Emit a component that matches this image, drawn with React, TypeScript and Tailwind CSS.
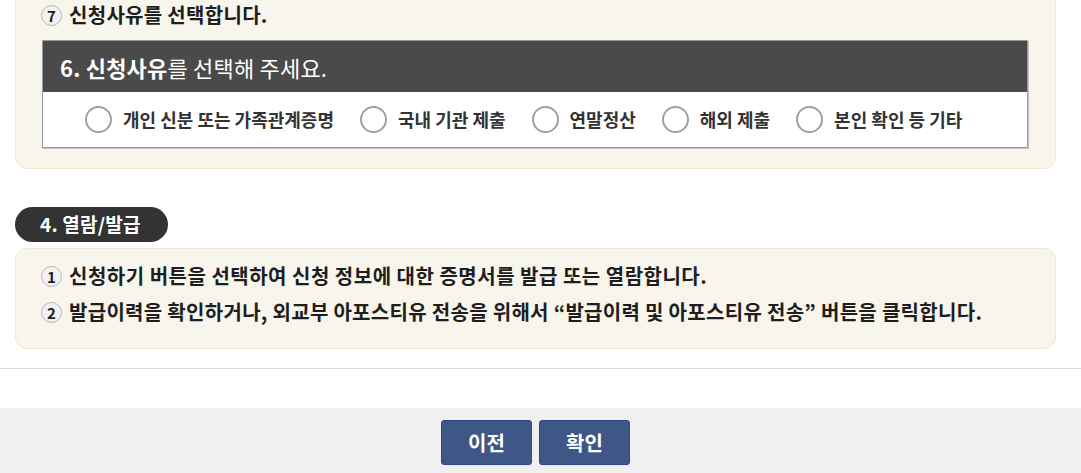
import { Fragment } from 'react';

const reasons = ['개인 신분 또는 가족관계증명', '국내 기관 제출', '연말정산', '해외 제출', '본인 확인 등 기타'];

function Num({ n }: { n: number }) {
  return (
    <span className="inline-flex h-[21px] w-[21px] shrink-0 items-center justify-center rounded-full border border-[#b4b4b4] bg-[#f1f1f1] text-[15px] font-bold leading-none text-[#1e1e1e]">
      {n}
    </span>
  );
}

export default function App() {
  return (
    <div
      className="relative h-[473px] w-[1081px] overflow-hidden bg-white text-[#1e1e1e]"
      style={{ fontFamily: '"Noto Sans CJK KR", "Noto Sans", sans-serif' }}
    >
      <div className="flex flex-col">
        <div className="mx-[15px] -mt-[20px] w-[1041px] rounded-[12px] border border-[#efe7d2] bg-[#f8f5ec] pb-[20px] pl-[25px] pr-[27px] pt-[22px]">
          <div className="flex h-[24px] items-center gap-[7px]">
            <Num n={7} />
            <p className="text-[20px] font-bold leading-[24px] tracking-[0.3px]">신청사유를 선택합니다.</p>
          </div>
          <div className="mt-[13px] ml-px w-[986px] border border-[#9a9a9a] shadow-[1px_1px_0_rgba(0,0,0,0.2)]">
            <div className="flex h-[51px] items-center bg-[#4a4a4a] pl-[17px] text-[22px] leading-none tracking-[0.2px] text-white">
              <span className="font-bold">6. 신청사유</span>
              <span>를 선택해 주세요.</span>
            </div>
            <div className="flex h-[55px] items-center gap-[26px] bg-white pl-[42px]">
              {reasons.map((r) => (
                <label key={r} className="flex items-center gap-[11px]">
                  <span className="h-[27px] w-[27px] rounded-full border-[2.5px] border-[#a0a0a0] bg-white" />
                  <span className="text-[18px] font-bold text-[#333]">{r}</span>
                </label>
              ))}
            </div>
          </div>
        </div>

        <div className="mx-[15px] mt-[38px] flex h-[35px] w-[153px] items-center rounded-full bg-[#333] pl-[25px] text-[19px] font-bold tracking-[0.2px] text-white">
          4. 열람/발급
        </div>

        <div className="mx-[15px] mt-[6px] h-[101px] w-[1041px] rounded-[12px] border border-[#efe7d2] bg-[#f8f5ec] pl-[25px] pt-[9px]">
          {[
            '신청하기 버튼을 선택하여 신청 정보에 대한 증명서를 발급 또는 열람합니다.',
            '발급이력을 확인하거나, 외교부 아포스티유 전송을 위해서 “발급이력 및 아포스티유 전송” 버튼을 클릭합니다.',
          ].map((t, i) => (
            <Fragment key={i}>
              <div className="flex h-[36px] items-center gap-[7px]">
                <Num n={i + 1} />
                <p className={i === 0 ? 'text-[20px] font-bold tracking-[0.5px]' : 'text-[20px] font-bold tracking-[0.3px]'}>{t}</p>
              </div>
            </Fragment>
          ))}
        </div>

        <div className="mt-[19px] h-px w-full bg-[#dcdcdc]" />

        <div className="mt-[39px] flex h-[70px] justify-center gap-[7px] bg-[#f0f0f0] pr-[10px] pt-[12px]">
          <button className="h-[45px] w-[91px] rounded-[3px] border border-[#2c4a85] bg-[#3e5787] text-[20px] font-bold text-white">
            이전
          </button>
          <button className="h-[45px] w-[91px] rounded-[3px] border border-[#2c4a85] bg-[#3e5787] text-[20px] font-bold text-white">
            확인
          </button>
        </div>
      </div>
    </div>
  );
}
